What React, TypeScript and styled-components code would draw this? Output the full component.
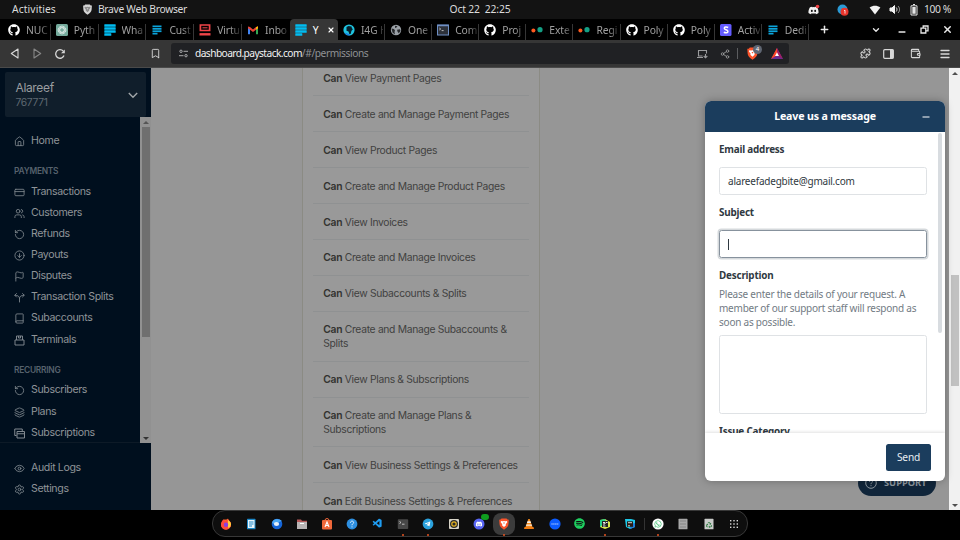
import React from 'react';
import styled, { createGlobalStyle, css } from 'styled-components';
import {
  House, CreditCard, Users, RotateCcw, CircleArrowDown, Flag, Book, Layers, Eye, Settings,
  ChevronDown, Bookmark, Share2, Puzzle, Menu, X, Plus, Minus, Wallet,
} from 'lucide-react';
import { FaGithub, FaDiscord, FaTelegramPlane, FaWhatsapp, FaSpotify, FaRecycle } from 'react-icons/fa';
import { VscVscode } from 'react-icons/vsc';

const ui = '"Noto Sans", "Open Sans", sans-serif';
const dash = 'Inter, "Liberation Sans", sans-serif';

const Global = createGlobalStyle`
  * { box-sizing: border-box; }
  body { margin: 0; background: #000; overflow: hidden; }
  svg { display: block; flex: none; }
`;

const Screen = styled.div`
  width: 960px;
  height: 540px;
  display: flex;
  flex-direction: column;
  overflow: hidden;
  background: #000;
  font-family: ${ui};
`;

/* ---------- Desktop top bar ---------- */
const TopBar = styled.header`
  height: 19px;
  flex: none;
  display: grid;
  grid-template-columns: 1fr auto 1fr;
  align-items: center;
  background: #131313;
  color: #dcdcdc;
  font-size: 10.3px;
  line-height: 19px;
  letter-spacing: -0.15px;
  white-space: pre;
`;
const TopLeft = styled.div`
  display: flex;
  align-items: center;
  padding-left: 12px;
  letter-spacing: 0.1px;
`;
const AppName = styled.span`
  display: flex;
  align-items: center;
  gap: 5px;
  margin-left: 26px;
  letter-spacing: -0.3px;
`;
const TopRight = styled.div`
  display: flex;
  align-items: center;
  justify-content: flex-end;
  padding-right: 9px;
  letter-spacing: -0.4px;
`;
const TrayItem = styled.span<{ $gap: number }>`
  display: flex;
  margin-right: ${p => p.$gap}px;
`;

/* ---------- Browser chrome ---------- */
const TabStrip = styled.nav`
  height: 21px;
  flex: none;
  display: flex;
  padding-left: 3px;
  background: #000;
`;
const TabBox = styled.div<{ $w: number; $active?: boolean; $line?: boolean }>`
  width: ${p => p.$w}px;
  height: 21px;
  flex: none;
  display: flex;
  align-items: center;
  padding-left: 5px;
  gap: 6px;
  font-size: 10.3px;
  color: ${p => (p.$active ? '#fff' : '#a0a0a0')};
  background: ${p => (p.$active ? '#363636' : '#000')};
  border-radius: ${p => (p.$active ? '4px 4px 0 0' : '0')};
  ${p => p.$line && css`
    background: linear-gradient(#363636, #363636) right 0 top 5px / 1px 16px no-repeat #000;
  `}
`;
const TabTitle = styled.span<{ $w: number; $fade?: boolean }>`
  width: ${p => p.$w}px;
  line-height: 20px;
  white-space: nowrap;
  letter-spacing: -0.1px;
  ${p => p.$fade && css`
    mask-image: linear-gradient(90deg, #000 60%, rgba(0, 0, 0, 0.25));
  `}
`;
const StripButtons = styled.div`
  flex: 1;
  display: flex;
  align-items: center;
  color: #e8e8e8;
`;
const StripSlot = styled.span<{ $ml: number; $drop?: number }>`
  margin-left: ${p => p.$ml}px;
  padding-top: ${p => p.$drop || 0}px;
`;
const Toolbar = styled.div`
  height: 28px;
  flex: none;
  display: flex;
  align-items: center;
  background: #363636;
  border-bottom: 1px solid #4a4a4a;
  color: #d8d8d8;
`;
const NavGroup = styled.div`
  width: 171px;
  display: flex;
  align-items: center;
  padding-left: 10px;
`;
const NavSlot = styled.span<{ $mr: number; $dim?: boolean }>`
  margin-right: ${p => p.$mr}px;
  opacity: ${p => (p.$dim ? 0.5 : 1)};
`;
const UrlBar = styled.div`
  width: 618px;
  height: 21px;
  display: flex;
  align-items: center;
  padding: 0 6px 0 8px;
  border-radius: 3px;
  background: #202124;
  font-size: 10.2px;
  line-height: 20px;
  color: #8f9194;
`;
const UrlText = styled.span`
  flex: 1;
  margin-left: 7px;
  padding-bottom: 1px;
  letter-spacing: -0.42px;
  b { font-weight: 400; color: #f2f2f2; letter-spacing: -0.57px; }
`;
const UrlActions = styled.div`
  display: flex;
  align-items: center;
  color: #9b9c9e;
`;
const UrlSep = styled.i`
  width: 1px;
  height: 11px;
  margin: 0 8px 0 7px;
  background: #5c5d60;
`;
const ShieldWrap = styled.span`
  position: relative;
  margin-right: 12px;
`;
const ShieldCount = styled.span`
  position: absolute;
  left: 7px;
  top: -2px;
  width: 9px;
  height: 9px;
  border-radius: 5px;
  background: #5f6672;
  color: #fff;
  font-size: 6px;
  line-height: 9px;
  text-align: center;
`;
const ToolbarRight = styled.div`
  flex: 1;
  display: flex;
  align-items: center;
  padding-left: 71px;
`;

/* ---------- Page ---------- */
const Page = styled.div`
  position: relative;
  height: 442px;
  flex: none;
  display: flex;
  background: #969696;
  font-family: ${dash};
`;
const Sidebar = styled.aside`
  width: 151px;
  flex: none;
  display: flex;
  flex-direction: column;
  background: #000f1e;
  color: #8f9498;
`;
const Account = styled.div`
  width: 141px;
  height: 45px;
  flex: none;
  margin: 4px 0 0 5px;
  padding: 0 7px 0 10.5px;
  display: flex;
  align-items: center;
  justify-content: space-between;
  background: #101e2b;
  border-radius: 2px;
`;
const AccountText = styled.div`
  display: flex;
  flex-direction: column;
  font-size: 12px;
  line-height: 15px;
  letter-spacing: -0.35px;
  color: #9a9da0;
  small {
    font-size: 10.3px;
    color: #5f6972;
  }
`;
const SideBody = styled.div`
  height: 326px;
  flex: none;
  display: flex;
`;
const SideScroll = styled.div`
  flex: 1;
  padding: 13px 0 0 14px;
  overflow: hidden;
  border-bottom: 1px solid #0d1a27;
`;
const NavRow = styled.div`
  height: 21.1px;
  display: flex;
  align-items: center;
  gap: 6px;
  font-size: 10.6px;
  letter-spacing: -0.37px;
  white-space: nowrap;
  svg { margin-top: 2px; color: #828a91; }
`;
const NavHeading = styled.h4`
  margin: 14.4px 0 2.4px;
  font-size: 8.4px;
  line-height: 13px;
  font-weight: 600;
  letter-spacing: -0.25px;
  color: #57626d;
`;
const SideFoot = styled.div`
  padding: 13.5px 0 0 14px;
`;
const SideTrack = styled.div`
  width: 11px;
  display: flex;
  flex-direction: column;
  align-items: center;
  background: #919191;
`;
const Arrow = styled.i<{ $up?: boolean; $color: string }>`
  width: 11px;
  height: 10px;
  flex: none;
  display: grid;
  place-items: center;
  &::after {
    content: '';
    border: 3px solid transparent;
    border-top-width: ${p => (p.$up ? 0 : 3)}px;
    border-bottom-width: ${p => (p.$up ? 3 : 0)}px;
    border-top-color: ${p => (p.$up ? 'transparent' : p.$color)};
    border-bottom-color: ${p => (p.$up ? p.$color : 'transparent')};
  }
`;
const Thumb = styled.div<{ $h: number; $top?: number; $color: string }>`
  width: 8px;
  height: ${p => p.$h}px;
  margin-top: ${p => p.$top || 0}px;
  background: ${p => p.$color};
`;
const Spacer = styled.div`
  flex: 1;
`;

const Content = styled.main`
  flex: 1;
  padding-left: 151px;
  overflow: hidden;
`;
const PermPanel = styled.ul`
  width: 238px;
  height: 442px;
  margin: 0;
  padding: 0 10px;
  border: solid #8b8b84;
  border-width: 0 1px;
  background: #999;
  overflow: hidden;
  list-style: none;
`;
const Perm = styled.li<{ $first?: boolean }>`
  margin-top: ${p => (p.$first ? -7.5 : 0)}px;
  padding: 10.500px 8px 10.400px 10.300px;
  border-bottom: 1px solid #8f9192;
  font-size: 10.3px;
  line-height: 14px;
  letter-spacing: -0.31px;
  color: #41413f;
  b { font-weight: 600; color: #32322f; }
`;
const PageTrack = styled.div`
  width: 11px;
  flex: none;
  display: flex;
  flex-direction: column;
  align-items: center;
  background: #f1f1f1;
`;

/* ---------- Support widget ---------- */
const Launcher = styled.div`
  position: absolute;
  left: 858px;
  top: 402px;
  width: 78px;
  height: 26px;
  display: flex;
  align-items: center;
  gap: 7px;
  padding-left: 7px;
  border-radius: 13px;
  background: #10253a;
  color: #8d979f;
  font: 700 9.3px/26px ${ui};
  letter-spacing: 0px;
`;
const Widget = styled.section`
  position: absolute;
  left: 705px;
  top: 33px;
  width: 240px;
  height: 380px;
  display: flex;
  flex-direction: column;
  border-radius: 6px;
  overflow: hidden;
  background: #fff;
  box-shadow: 0 0 8px rgba(0, 0, 0, 0.28);
  font-family: ${ui};
  color: #2f3941;
`;
const WidgetHead = styled.div`
  height: 31px;
  flex: none;
  display: grid;
  grid-template-columns: 39px 1fr 39px;
  place-items: center;
  background: #1b3d5d;
  color: #fff;
  font-size: 10.6px;
  font-weight: 700;
  line-height: 14px;
  letter-spacing: -0.15px;
  span { padding-bottom: 1px; }
`;
const Form = styled.div`
  flex: 1;
  overflow: hidden;
  display: flex;
  justify-content: space-between;
  padding: 0 3px 0 14px;
`;
const Fields = styled.div`
  width: 208px;
  padding-top: 10px;
`;
const Label = styled.div<{ $gap: number }>`
  height: 14px;
  margin-bottom: ${p => p.$gap}px;
  font-size: 9.9px;
  line-height: 14px;
  font-weight: 700;
  letter-spacing: -0.2px;
`;
const Input = styled.div<{ $focus?: boolean }>`
  height: 28px;
  margin-bottom: 10px;
  padding: 0 8px;
  display: flex;
  align-items: center;
  border: 1px solid ${p => (p.$focus ? '#87929d' : '#dfe2e5')};
  border-radius: 2.5px;
  box-shadow: ${p => (p.$focus ? '0 0 0 1.5px #d5d9dc' : 'none')};
  font-size: 10px;
  letter-spacing: -0.22px;
`;
const Caret = styled.i`
  width: 1px;
  height: 11px;
  background: #2f3941;
`;
const Hint = styled.p`
  margin: 0 0 6px;
  font-size: 10px;
  line-height: 14px;
  letter-spacing: -0.23px;
  color: #727b84;
  white-space: nowrap;
`;
const TextArea = styled.div`
  height: 79px;
  margin-bottom: 10px;
  border: 1px solid #dfe2e5;
  border-radius: 2.5px;
`;
const FormThumb = styled.div`
  width: 4px;
  height: 200px;
  margin-top: 1px;
  border-radius: 2px;
  background: #d8dce0;
`;
const WidgetFoot = styled.div`
  height: 48px;
  flex: none;
  display: flex;
  align-items: center;
  justify-content: flex-end;
  padding-right: 14px;
  box-shadow: 0 -1px 3px rgba(0, 0, 0, 0.12);
`;
const Send = styled.button`
  width: 45px;
  height: 27px;
  padding: 0;
  border: 0;
  border-radius: 2.5px;
  background: #1b3d5d;
  color: #e8edf1;
  font: 10.2px ${ui};
  letter-spacing: -0.2px;
`;

/* ---------- Dock ---------- */
const DockArea = styled.footer`
  height: 30px;
  flex: none;
  display: flex;
  justify-content: center;
`;
const Dock = styled.div`
  width: 536px;
  height: 27px;
  display: flex;
  align-items: center;
  padding: 0 0.5px;
  border: 1px solid #383838;
  border-radius: 13px;
  background: #0e0e0e;
`;
const DockItem = styled.div<{ $active?: boolean; $run?: boolean }>`
  position: relative;
  width: 25.34px;
  height: 22px;
  display: grid;
  place-items: center;
  &::before {
    content: '';
    position: absolute;
    inset: 0 1.6px;
    border-radius: 8px;
    background: ${p => (p.$active ? '#3c3c3c' : 'transparent')};
  }
  &::after {
    content: '';
    position: absolute;
    left: 11.5px;
    bottom: -1px;
    width: 2px;
    height: 2px;
    border-radius: 1px;
    background: ${p => (p.$run ? '#e95420' : 'transparent')};
  }
  svg { position: relative; }
`;
const DockBadge = styled.span`
  position: absolute;
  left: 15px;
  top: 1px;
  width: 8px;
  height: 6px;
  border-radius: 3px;
  background: #0f9d1f;
`;
const DockSep = styled.i`
  width: 1px;
  height: 12px;
  margin: 0 0.5px 0 1px;
  background: #333;
`;

/* ---------- Drawings ---------- */
const BraveLogo = ({ size = 12, color = '#fb542b', mark = '#fff' }) => (
  <svg width={size} height={size} viewBox="0 0 12 12">
    <path d="M3.500 0.500h5l1 1 1.300.2-.3 4.300c-.2 2.500-1.600 3.800-4.500 5.700C3.100 9.800 1.700 8.500 1.500 6l-.3-4.300 1.300-.2z" fill={color} />
    <path d="M3 3l1.800.3L6 3l1.200.3L9 3l.3 1.200-1.600 2 .3 1L6 9 4 7.200l.3-1-1.600-2z" fill={mark} />
    <path d="M5.100 4.500L6 6.200l.9-1.700z" fill={color} />
  </svg>
);
const Paystack = () => (
  <svg width="12" height="12" viewBox="0 0 12 12" fill="#00bdf2">
    <rect x="0.300" y="0.300" width="11.400" height="2.500" rx=".4" />
    <rect x="0.300" y="3.300" width="11.400" height="2.500" rx=".4" />
    <rect x="0.300" y="6.300" width="11.400" height="2.500" rx=".4" />
    <rect x="0.300" y="9.300" width="7" height="2.500" rx=".4" />
  </svg>
);
const PaystackSmall = () => (
  <svg width="12" height="12" viewBox="0 0 12 12" fill="#0ba4db">
    <rect x="1.500" y="1.500" width="9" height="1.700" />
    <rect x="1.500" y="4" width="9" height="1.700" />
    <rect x="1.500" y="6.400" width="9" height="1.700" />
    <rect x="1.500" y="8.800" width="5" height="1.700" />
  </svg>
);
const Knot = () => (
  <svg width="12" height="12" viewBox="0 0 12 12">
    <rect width="12" height="12" rx="1.500" fill="#74aa9c" />
    <g fill="none" stroke="#fff" strokeWidth=".55">
      {[0, 60, 120].map(a => (
        <rect key={a} x="3.900" y="2" width="4.200" height="8" rx="2.100" transform={`rotate(${a} 6 6)`} />
      ))}
    </g>
  </svg>
);
const Virtual = () => (
  <svg width="12" height="12" viewBox="0 0 12 12" fill="none" stroke="#f04448" strokeWidth="1.700">
    <path d="M1.400 1h9.200v5.500H1.400z" /><path d="M.5 10.300h11" strokeWidth="2.400" /><path d="M3.500 3.800h5" strokeWidth="1" />
  </svg>
);
const Gmail = () => (
  <svg width="12" height="12" viewBox="0 0 12 12">
    <path d="M1 3v7.200h2V4.800z" fill="#4285f4" /><path d="M11 3v7.200H9V4.800z" fill="#34a853" />
    <path d="M1 2.600L3 3l3 2.500L9 3l2-.4v1.700L6 8 1 4.300z" fill="#ea4335" />
    <path d="M9 3.200l2-.9v2L9 5.800z" fill="#fbbc04" />
  </svg>
);
const Africa = () => (
  <svg width="12" height="12" viewBox="0 0 12 12">
    <circle cx="6" cy="6" r="5.600" fill="#1fc4e0" />
    <path d="M3.500 3l2-1 3 .6.500 2 1 .4-1.600 2-.6 2.800-1.400.4-.9-2.800-2-.7z" fill="#06202c" />
    <path d="M1.500 8.500A5.600 5.600 0 0 0 7 11.500L6 10z" fill="#1a7be8" />
  </svg>
);
const World = () => (
  <svg width="12" height="12" viewBox="0 0 12 12">
    <circle cx="6" cy="6" r="5.200" fill="#9aa0a6" />
    <path d="M1.500 4.500L4 5l1 1.500L4.500 8l.5 2.500L2.500 8.500zM5 1.800l2.500.4-1 1.300-1.500.5zM7 5.800l3-.5.5 1.700-1.700 2.300-1.200-1.600z" fill="#26282b" />
  </svg>
);
const Terminal = () => (
  <svg width="12" height="12" viewBox="0 0 12 12">
    <rect x=".5" y="1" width="11" height="10" fill="#2c313a" stroke="#6e8fc4" />
    <path d="M.5 1.500h11" stroke="#6e8fc4" strokeWidth="1.500" />
    <path d="M2.300 4l1.400 1-1.400 1M4.600 6.600h2" stroke="#ddd" strokeWidth=".8" fill="none" />
  </svg>
);
const TwoDots = () => (
  <svg width="12" height="12" viewBox="0 0 12 12">
    <circle cx="2.400" cy="6.500" r="2" fill="#ff5a1f" /><circle cx="9" cy="5.700" r="2.600" fill="#14a085" />
  </svg>
);
const StripeIcon = () => (
  <svg width="12" height="12" viewBox="0 0 12 12">
    <rect width="11.500" height="12" rx="1.500" fill="#635bff" />
    <path d="M8.200 3.500C6.500 2.700 4.300 2.700 4.300 4.200c0 1.800 3.600 1.400 3.600 3.300 0 1.700-2.400 1.600-4.100.8" stroke="#fff" strokeWidth="1.500" fill="none" />
  </svg>
);
const SplitIcon = () => (
  <svg width="11" height="11" viewBox="0 0 22 22" fill="none" stroke="currentColor" strokeWidth="1.700" strokeLinecap="round" strokeLinejoin="round">
    <path d="M11 20v-7c0-4-3-6.500-9-6.500M11 13c0-4 3-6.500 9-6.500M5 3L1.500 6.500 5 10M17 3l3.500 3.500L17 10" />
  </svg>
);
const TillIcon = () => (
  <svg width="11" height="11" viewBox="0 0 22 22" fill="none" stroke="currentColor" strokeWidth="1.900" strokeLinejoin="round">
    <path d="M2 10h18v10H2zM5 10V2h12v8M9 2v4h4V2" />
  </svg>
);
const CardsIcon = () => (
  <svg width="11" height="11" viewBox="0 0 22 22" fill="none" stroke="currentColor" strokeWidth="2" strokeLinejoin="round">
    <path d="M5 15H1.500V2h15v4M6 7h15v13H6zM6 11.500h15" />
  </svg>
);

const ico = { size: 11, strokeWidth: 1.8 };

const tabs: { icon: React.ReactNode; title: string }[] = [
  { icon: <FaGithub size={12} color="#fff" />, title: 'NUC' },
  { icon: <Knot />, title: 'Pyth' },
  { icon: <Paystack />, title: 'Wha' },
  { icon: <PaystackSmall />, title: 'Cust' },
  { icon: <Virtual />, title: 'Virtu' },
  { icon: <Gmail />, title: 'Inbo' },
  { icon: <Paystack />, title: 'Y' },
  { icon: <Africa />, title: 'I4G H' },
  { icon: <World />, title: 'One' },
  { icon: <Terminal />, title: 'Com' },
  { icon: <FaGithub size={12} color="#fff" />, title: 'Proj' },
  { icon: <TwoDots />, title: 'Exte' },
  { icon: <TwoDots />, title: 'Regi' },
  { icon: <FaGithub size={12} color="#fff" />, title: 'Poly' },
  { icon: <FaGithub size={12} color="#fff" />, title: 'Poly' },
  { icon: <StripeIcon />, title: 'Activ' },
  { icon: <PaystackSmall />, title: 'Dedi' },
];

const payments: [React.ReactNode, string][] = [
  [<CreditCard {...ico} />, 'Transactions'],
  [<Users {...ico} />, 'Customers'],
  [<RotateCcw {...ico} />, 'Refunds'],
  [<CircleArrowDown {...ico} />, 'Payouts'],
  [<Flag {...ico} />, 'Disputes'],
  [<SplitIcon />, 'Transaction Splits'],
  [<Book {...ico} />, 'Subaccounts'],
  [<TillIcon />, 'Terminals'],
];
const recurring: [React.ReactNode, string][] = [
  [<RotateCcw {...ico} />, 'Subscribers'],
  [<Layers {...ico} />, 'Plans'],
  [<CardsIcon />, 'Subscriptions'],
];

const permissions = [
  'View Payment Pages',
  'Create and Manage Payment Pages',
  'View Product Pages',
  'Create and Manage Product Pages',
  'View Invoices',
  'Create and Manage Invoices',
  'View Subaccounts & Splits',
  'Create and Manage Subaccounts & Splits',
  'View Plans & Subscriptions',
  'Create and Manage Plans & Subscriptions',
  'View Business Settings & Preferences',
  'Edit Business Settings & Preferences',
];

const D = ({ children }: { children: React.ReactNode }) => (
  <svg width="12" height="12" viewBox="0 0 12 12">{children}</svg>
);

const dockLeft: { art: React.ReactNode; run?: boolean; active?: boolean; badge?: boolean }[] = [
  { art: <D><circle cx="6" cy="6.500" r="5" fill="#ff7a1a" /><path d="M2 3L4 1l1 2 3-2.500c.5 2 3 3 3 6A5 5 0 0 1 1 7z" fill="#ff4b3a" /><path d="M7.800.8C8 3 11 3.500 11 6.500A4 4 0 0 1 8 10z" fill="#ffd23a" /><circle cx="6" cy="6.800" r="2.200" fill="#8b3fe0" /></D> },
  { art: <D><rect x="2" y=".8" width="8.500" height="10.500" rx=".6" fill="#1e88c7" /><rect x="3" y="2" width="6.500" height="8" fill="#eaf5fb" /><path d="M4 4h4.500M4 6h4.500M4 8h3" stroke="#1e88c7" /></D> },
  { art: <D><circle cx="6" cy="6" r="5.300" fill="#1565d8" /><path d="M1 5C2 0 8 0 11 3L8 4 5 7z" fill="#4aa8f5" /><ellipse cx="5.500" cy="6" rx="2.600" ry="2" fill="#e6f1fb" /></D> },
  { art: <D><path d="M1 1.500h4l1 1.200h5V11H1z" fill="#b65a5a" /><path d="M1 4h10v7H1z" fill="#b9b4b4" /><path d="M4 5.500h4" stroke="#fff" /></D> },
  { art: <D><rect x="1" y="2" width="10" height="9.500" rx="1" fill="#f0683a" /><path d="M4 2.500a2 2 0 0 1 4 0" stroke="#f0683a" fill="none" /><path d="M4 9l2-5 2 5M4.500 7.500h3" stroke="#fff" fill="none" strokeWidth="1.100" /></D> },
  { art: <D><circle cx="6" cy="6" r="5.400" fill="#2d8fe0" /><path d="M4.500 4.700c0-2.200 3.300-2 3.100 0C7.500 5.800 6 5.700 6 7.300M6 8.400v1" stroke="#e6f4ff" fill="none" /></D> },
  { art: <VscVscode size={11} color="#1f9cf0" /> },
  { art: <D><rect x=".8" y="1.300" width="10.400" height="9.800" rx=".8" fill="#484848" /><path d="M2.500 3.500l1.500 1-1.500 1M5 6.200h2.500" stroke="#ddd" fill="none" strokeWidth=".8" /></D>, run: true },
  { art: <D><circle cx="6" cy="6" r="5.400" fill="#2aa1dc" /><svg x="2.300" y="2.700" width="6.500" height="6.500"><FaTelegramPlane size={6.5} color="#fff" /></svg></D>, run: true },
  { art: <D><rect x="1" y="1" width="10" height="10" rx="1" fill="#d8d4c8" /><circle cx="6" cy="6" r="4" fill="#2c2c2c" /><circle cx="6" cy="6" r="2.200" fill="none" stroke="#e6b422" strokeWidth="1.200" /></D> },
  { art: <D><circle cx="6" cy="6" r="5.500" fill="#5865f2" /><svg x="2.500" y="2.500" width="7" height="7"><FaDiscord size={7} color="#fff" /></svg></D>, badge: true },
  { art: <BraveLogo />, active: true, run: true },
  { art: <D><path d="M5.300 1h1.400l2.800 8h-7z" fill="#f58a1f" /><path d="M4.500 3.300h3l.6 1.600H3.900zM3.300 6.500h5.400l.5 1.300H2.800z" fill="#f3efe8" /><path d="M1.500 9h9l.5 2H1z" fill="#f07c12" /></D> },
  { art: <D><circle cx="6" cy="6" r="5.600" fill="#0b5cff" /><path d="M2.300 6h7.400" stroke="#a9c6ff" strokeWidth="1.200" strokeDasharray="1.500 .3" /></D> },
  { art: <FaSpotify size={11} color="#1ecf5f" /> },
  { art: <D><path d="M1 2l5-1 5 3v5l-5 2-5-2z" fill="#d9e84a" /><path d="M1 2l5-1 1 3-6 5z" fill="#25d08a" /><rect x="3" y="3" width="6" height="6" fill="#222" /><path d="M4 8h2.500M4 4.500h2v1.500H4M7 4.500h1.500" stroke="#fff" strokeWidth=".9" fill="none" /></D>, run: true },
  { art: <D><path d="M1 1h6l4 1v7l-5 2-4-2z" fill="#1cc9e8" /><path d="M7 6l4-1v4l-5 2z" fill="#1e7bd8" /><rect x="3" y="3.300" width="6" height="5.500" fill="#2a1c14" /><path d="M4 7.800h2M4 4.700h4" stroke="#e8e8e8" strokeWidth=".9" /></D> },
];
const dockRight: { art: React.ReactNode; run?: boolean }[] = [
  { art: <D><circle cx="6" cy="6" r="5.600" fill="#fff" /><svg x="2" y="2" width="8" height="8"><FaWhatsapp size={8} color="#25b860" /></svg></D>, run: true },
  { art: <D><rect x="1.500" y=".8" width="9" height="10.500" rx=".6" fill="#a8a8a8" /><path d="M3 3h6M3 6h6M3 9h6" stroke="#7b7b7b" strokeWidth=".8" /></D> },
  { art: <D><rect x="1.500" y=".8" width="9" height="10.500" rx=".6" fill="#c9cbc9" /><svg x="3" y="4" width="6" height="6"><FaRecycle size={6} color="#2c7a3f" /></svg></D> },
  { art: <D>{[2.7, 6, 9.3].map(x => [2.7, 6, 9.3].map(y => <rect key={`${x}-${y}`} x={x - 0.7} y={y - 0.7} width="1.400" height="1.400" fill="#dcdcdc" />))}</D> },
];

export default function App() {
  return (
    <Screen>
      <Global />
      <TopBar>
        <TopLeft>
          Activities
          <AppName><BraveLogo size={11} color="#d5d5d5" mark="#8c8c8c" />Brave Web Browser</AppName>
        </TopLeft>
        <span>{'Oct 22  22:25'}</span>
        <TopRight>
          <TrayItem $gap={17}>
            <svg width="12" height="12" viewBox="0 0 12 12">
              <svg x="0" y="1" width="11" height="11"><FaDiscord size={11} color="#f2f2f2" /></svg>
              <circle cx="9.500" cy="2.500" r="1.800" fill="#ed4245" />
            </svg>
          </TrayItem>
          <TrayItem $gap={20}>
            <svg width="12" height="12" viewBox="0 0 12 12">
              <circle cx="5.500" cy="5.500" r="5" fill="#2b9bd6" /><circle cx="7.500" cy="7.700" r="4" fill="#e8352c" />
              <path d="M7 6.800l1-.6v3.400" stroke="#fff" strokeWidth=".8" fill="none" />
            </svg>
          </TrayItem>
          <TrayItem $gap={8}>
            <svg width="12" height="10" viewBox="0 0 12 10"><path d="M.6 2.500C4 .3 8 .3 11.400 2.500L6 9.500z" fill="#f2f2f2" /></svg>
          </TrayItem>
          <TrayItem $gap={9}>
            <svg width="12" height="11" viewBox="0 0 12 11" fill="none" stroke="#f2f2f2">
              <path d="M1 4h2l2.500-2.500v8L3 7H1z" fill="#f2f2f2" /><path d="M7.200 3.500c1 1 1 3 0 4" /><path d="M9 2c2 2 2 5 0 7" opacity=".6" />
            </svg>
          </TrayItem>
          <TrayItem $gap={6}>
            <svg width="8" height="12" viewBox="0 0 8 12"><path d="M3 .5h2M1 1.800h6v9.200H1z" stroke="#e4e4e4" fill="none" strokeWidth="1" /><path d="M2.300 3h3.400v6.800H2.300z" fill="#e4e4e4" /></svg>
          </TrayItem>
          100 %
        </TopRight>
      </TopBar>

      <TabStrip>
        {tabs.map((t, i) => (
          <TabBox key={i} $w={i < 6 ? 47.8 : i === 6 ? 48.2 : 47.1} $active={i === 6} $line={i !== 6 && i !== 5}>
            {t.icon}
            <TabTitle $w={i === 6 ? 8 : 22} $fade={i !== 6}>{t.title}</TabTitle>
            {i === 6 && <X size={8} strokeWidth={3.5} />}
          </TabBox>
        ))}
        <StripButtons>
          <StripSlot $ml={10}><Plus size={11} strokeWidth={3.2} /></StripSlot>
          <StripSlot $ml={41}><ChevronDown size={10} strokeWidth={3.2} /></StripSlot>
          <StripSlot $ml={16} $drop={5}><Minus size={10} strokeWidth={3.5} /></StripSlot>
          <StripSlot $ml={13}>
            <svg width="9" height="9" viewBox="0 0 9 9" fill="none" stroke="currentColor" strokeWidth="1.300"><path d="M1 3.200h4.800v4.800H1zM3.200 3V1H8v4.800H6" /></svg>
          </StripSlot>
          <StripSlot $ml={13}><X size={11} strokeWidth={3.2} /></StripSlot>
        </StripButtons>
      </TabStrip>

      <Toolbar>
        <NavGroup>
          <NavSlot $mr={14}>
            <svg width="9" height="11" viewBox="0 0 9 11" fill="none" stroke="currentColor" strokeWidth="1.100" strokeLinejoin="round"><path d="M8 1v9L1.300 5.500z" /></svg>
          </NavSlot>
          <NavSlot $mr={12} $dim>
            <svg width="9" height="11" viewBox="0 0 9 11" fill="none" stroke="currentColor" strokeWidth="1.100" strokeLinejoin="round"><path d="M1 1v9l6.700-4.500z" /></svg>
          </NavSlot>
          <NavSlot $mr={84}>
            <svg width="12" height="12" viewBox="0 0 12 12" fill="none" stroke="currentColor" strokeWidth="1.300"><path d="M10 7.500A4.300 4.300 0 1 1 9.300 3.200" /><path d="M10.800 1.500v3.700H7.100z" fill="currentColor" stroke="none" /></svg>
          </NavSlot>
          <Bookmark size={11} strokeWidth={2} />
        </NavGroup>
        <UrlBar>
          <svg width="9" height="9" viewBox="0 0 9 9" fill="none" stroke="#a8a9ab"><circle cx="2" cy="2.300" r="1.200" /><path d="M4.500 2.300H9M0 6.700h4.500" /><circle cx="7" cy="6.700" r="1.200" /></svg>
          <UrlText><b>dashboard.paystack.com</b>/#/permissions</UrlText>
          <UrlActions>
            <NavSlot $mr={12}>
              <svg width="11" height="10" viewBox="0 0 11 10" fill="none" stroke="currentColor" strokeWidth="1.100"><path d="M9.500 4.500V1.500h-8v5.500h4M0 8.500h6" /><path d="M8.500 5v3.500M6.700 7l1.800 1.800L10.300 7" /></svg>
            </NavSlot>
            <Share2 size={10} strokeWidth={2} />
            <UrlSep />
            <ShieldWrap><BraveLogo size={13} /><ShieldCount>4</ShieldCount></ShieldWrap>
            <svg width="12" height="11" viewBox="0 0 12 11"><path d="M6 0l6 11H0z" fill="#662d91" /><path d="M6 0L0 11l6-3.800z" fill="#ff4724" /><path d="M6 0l6 11-6-3.800z" fill="#9e1f63" /><path d="M6 4.300L8 8H4z" fill="#fff" /></svg>
          </UrlActions>
        </UrlBar>
        <ToolbarRight>
          <NavSlot $mr={12}><Puzzle size={11} strokeWidth={2.2} /></NavSlot>
          <NavSlot $mr={16}>
            <svg width="11" height="10" viewBox="0 0 11 10"><rect x=".7" y=".7" width="9.600" height="8.600" rx="1" fill="none" stroke="currentColor" strokeWidth="1.200" /><path d="M7 .7h3.500v8.600H7z" fill="currentColor" /></svg>
          </NavSlot>
          <NavSlot $mr={18}><Wallet size={11} strokeWidth={2.2} /></NavSlot>
          <Menu size={12} strokeWidth={2.6} />
        </ToolbarRight>
      </Toolbar>

      <Page>
        <Sidebar>
          <Account>
            <AccountText>Alareef<small>767771</small></AccountText>
            <svg width="12" height="12" viewBox="0 0 12 12" fill="none" stroke="#a2a6a9" strokeWidth="1.400"><path d="M1.800 4L6 8.200 10.200 4" /></svg>
          </Account>
          <SideBody>
            <SideScroll>
              <NavRow><House {...ico} />Home</NavRow>
              <NavHeading>PAYMENTS</NavHeading>
              {payments.map(([icon, text]) => <NavRow key={text}>{icon}{text}</NavRow>)}
              <NavHeading>RECURRING</NavHeading>
              {recurring.map(([icon, text]) => <NavRow key={text}>{icon}{text}</NavRow>)}
            </SideScroll>
            <SideTrack>
              <Arrow $up $color="#555" />
              <Thumb $h={210} $color="#6f6f6f" />
              <Spacer />
              <Arrow $color="#333" />
            </SideTrack>
          </SideBody>
          <SideFoot>
            <NavRow><Eye {...ico} />Audit Logs</NavRow>
            <NavRow><Settings {...ico} />Settings</NavRow>
          </SideFoot>
        </Sidebar>
        <Content>
          <PermPanel>
            {permissions.map((p, i) => <Perm key={p} $first={i === 0}><b>Can</b> {p}</Perm>)}
          </PermPanel>
        </Content>
        <PageTrack>
          <Arrow $up $color="#505050" />
          <Thumb $h={111} $top={197} $color="#c1c1c1" />
          <Spacer />
          <Arrow $color="#505050" />
        </PageTrack>

        <Launcher>
          <svg width="12" height="12" viewBox="0 0 12 12" fill="none" stroke="currentColor"><circle cx="6" cy="6" r="5.300" /><path d="M4.600 4.800c0-2 3-1.800 2.800 0C7.300 5.800 6 5.800 6 7.200M6 8.200v1" /></svg>
          SUPPORT
        </Launcher>
        <Widget>
          <WidgetHead><i /><span>Leave us a message</span><svg width="8" height="2" viewBox="0 0 8 2"><path d="M.5 1h7" stroke="#fff" strokeWidth="1.200" /></svg></WidgetHead>
          <Form>
            <Fields>
              <Label $gap={11}>Email address</Label>
              <Input>alareefadegbite@gmail.com</Input>
              <Label $gap={11}>Subject</Label>
              <Input $focus><Caret /></Input>
              <Label $gap={5}>Description</Label>
              <Hint>Please enter the details of your request. A<br />member of our support staff will respond as<br />soon as possible.</Hint>
              <TextArea />
              <Label $gap={10}>Issue Category</Label>
            </Fields>
            <FormThumb />
          </Form>
          <WidgetFoot><Send>Send</Send></WidgetFoot>
        </Widget>
      </Page>

      <DockArea>
        <Dock>
          {dockLeft.map((d, i) => (
            <DockItem key={i} $run={d.run} $active={d.active}>{d.art}{d.badge && <DockBadge />}</DockItem>
          ))}
          <DockSep />
          {dockRight.map((d, i) => <DockItem key={i} $run={d.run}>{d.art}</DockItem>)}
        </Dock>
      </DockArea>
    </Screen>
  );
}
